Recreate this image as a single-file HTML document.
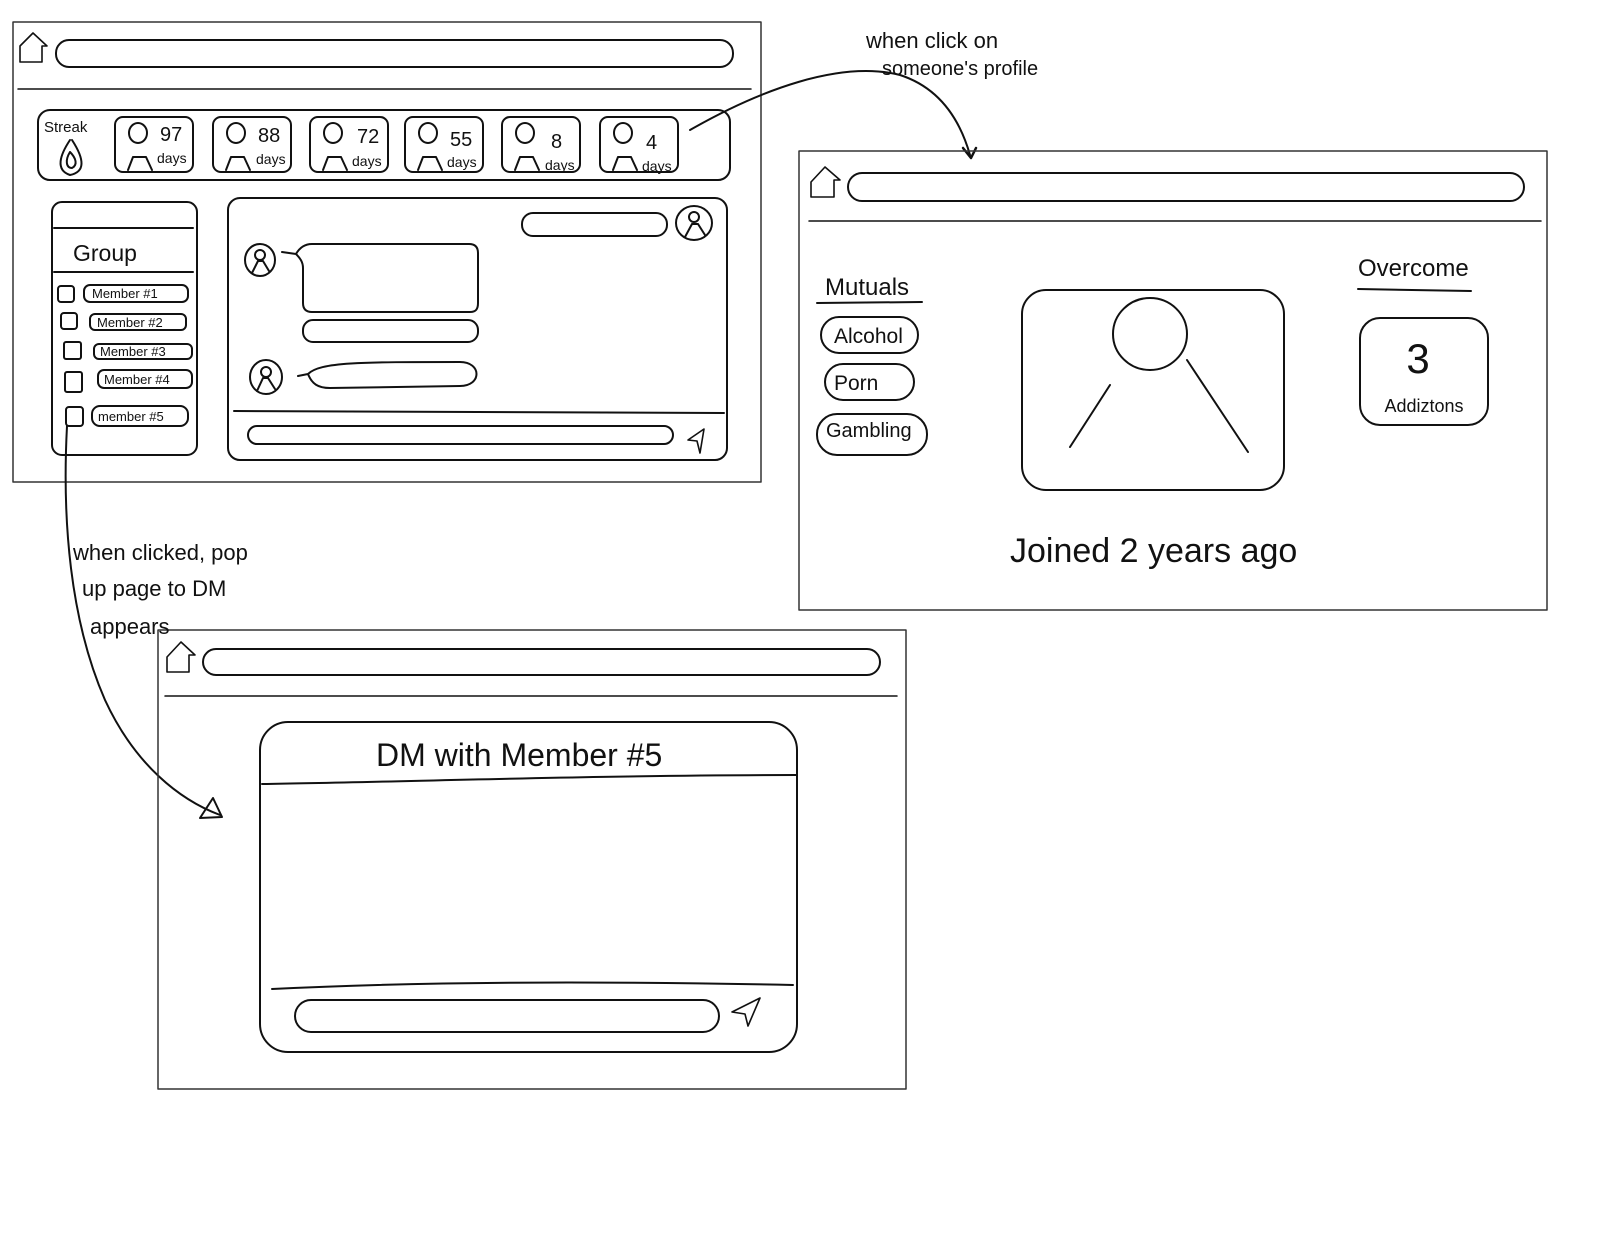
<!DOCTYPE html>
<html><head><meta charset="utf-8"><style>
html,body{margin:0;padding:0;background:#fff;}
svg{display:block}
text{font-family:"Liberation Sans",sans-serif;fill:#111;font-weight:300}
</style></head><body>
<svg width="1600" height="1239" viewBox="0 0 1600 1239" xmlns="http://www.w3.org/2000/svg">
<rect width="1600" height="1239" fill="#fff"/>
<g fill="none" stroke="#111" stroke-width="2" stroke-linecap="round" stroke-linejoin="round">
<!-- FRAME 1 -->
<rect x="13" y="22" width="748" height="460" stroke="#333" stroke-width="1.5"/>
<path d="M20 62 L20 46 L33 33 L47 46 L42 46 L42 62 Z" stroke-width="1.6"/>
<rect x="56" y="40" width="677" height="27" rx="13"/>
<line x1="18" y1="89" x2="751" y2="89" stroke-width="1.5"/>
<rect x="38" y="110" width="692" height="70" rx="12"/>
<path d="M70 140 C60 155 55 170 70 175 C85 172 85 160 72 140 M70 152 C65 160 66 168 72 168 C78 165 76 158 70 152"/>
<g id="c">
<rect x="115" y="117" width="78" height="55" rx="8"/>
<ellipse cx="138" cy="133" rx="9" ry="10"/>
<path d="M128 170 L133 157 L146 157 L152 170"/>
</g>
<use href="#c" x="98"/><use href="#c" x="195"/><use href="#c" x="290"/><use href="#c" x="387"/><use href="#c" x="485"/>
<!-- group panel -->
<rect x="52" y="202" width="145" height="253" rx="10"/>
<line x1="54" y1="228" x2="193" y2="228"/>
<line x1="54" y1="272" x2="193" y2="272"/>
<rect x="58" y="286" width="16" height="16" rx="3"/><rect x="84" y="285" width="104" height="17" rx="6"/>
<rect x="61" y="313" width="16" height="16" rx="3"/><rect x="90" y="314" width="96" height="16" rx="5"/>
<rect x="64" y="342" width="17" height="17" rx="2"/><rect x="94" y="344" width="98" height="15" rx="5"/>
<rect x="65" y="372" width="17" height="20" rx="2"/><rect x="98" y="370" width="94" height="18" rx="6"/>
<rect x="66" y="407" width="17" height="19" rx="3"/><rect x="92" y="406" width="96" height="20" rx="8"/>
<!-- chat panel -->
<rect x="228" y="198" width="499" height="262" rx="12"/>
<line x1="234" y1="411" x2="724" y2="413"/>
<rect x="248" y="426" width="425" height="18" rx="9"/>
<path d="M704 429 L688 440 L697 441 L700 453 Z" stroke-width="1.6"/>
<rect x="522" y="213" width="145" height="23" rx="11"/>
<ellipse cx="694" cy="223" rx="18" ry="17"/><circle cx="694" cy="217" r="5"/><path d="M685 237 L692 224 L698 224 L705 235"/>
<ellipse cx="260" cy="260" rx="15" ry="16"/><circle cx="260" cy="255" r="5"/><path d="M252 273 L258 261 L263 261 L269 271"/>
<path d="M282 252 L296 254 C300 258 303 262 303 268 L303 303 C303 309 306 312 312 312 L470 312 C476 312 478 309 478 303 L478 253 C478 247 475 244 469 244 L312 244 C305 244 300 247 296 254"/>
<rect x="303" y="320" width="175" height="22" rx="10"/>
<ellipse cx="266" cy="377" rx="16" ry="17"/><circle cx="266" cy="372" r="5"/><path d="M257 391 L263 378 L268 378 L275 389"/>
<path d="M298 376 L308 374 C320 362 360 362 460 362 C482 362 482 386 460 386 L330 388 C318 388 312 384 308 374"/>
<!-- arrow 1 -->
<path d="M690 130 C760 90 840 60 900 75 C940 88 960 120 970 155"/>
<path d="M963 148 L971 158 L976 148" stroke-width="2.5"/>
<!-- arrow 2 -->
<path d="M67 426 C62 520 70 620 105 700 C135 765 180 800 220 815"/>
<path d="M200 818 L222 817 L213 798 Z" stroke-width="2"/>

<!-- FRAME 2 -->
<rect x="799" y="151" width="748" height="459" stroke="#333" stroke-width="1.5"/>
<path d="M811 197 L811 182 L825 167 L840 180 L834 180 L834 197 Z" stroke-width="1.6"/>
<rect x="848" y="173" width="676" height="28" rx="14"/>
<line x1="809" y1="221" x2="1541" y2="221" stroke-width="1.5"/>
<line x1="817" y1="303" x2="922" y2="302"/>
<rect x="821" y="317" width="97" height="36" rx="18"/>
<rect x="825" y="364" width="89" height="36" rx="18"/>
<rect x="817" y="414" width="110" height="41" rx="20"/>
<rect x="1022" y="290" width="262" height="200" rx="24"/>
<ellipse cx="1150" cy="334" rx="37" ry="36"/>
<path d="M1110 385 L1070 447 M1187 360 L1248 452"/>
<line x1="1358" y1="289" x2="1471" y2="291"/>
<rect x="1360" y="318" width="128" height="107" rx="20"/>

<!-- FRAME 3 -->
<rect x="158" y="630" width="748" height="459" stroke="#333" stroke-width="1.5"/>
<path d="M167 672 L167 657 L181 642 L195 655 L189 655 L189 672 Z" stroke-width="1.6"/>
<rect x="203" y="649" width="677" height="26" rx="13"/>
<line x1="165" y1="696" x2="897" y2="696" stroke-width="1.5"/>
<rect x="260" y="722" width="537" height="330" rx="28"/>
<path d="M262 784 C400 782 600 775 796 775"/>
<path d="M272 989 C450 980 650 982 793 985"/>
<rect x="295" y="1000" width="424" height="32" rx="16"/>
<path d="M760 998 L732 1012 L745 1014 L748 1026 Z" stroke-width="1.6"/>
</g>
<!-- TEXT -->
<g>
<text x="44" y="132" font-size="15">Streak</text>
<g font-size="20"><text x="160" y="141">97</text><text x="258" y="142">88</text><text x="357" y="143">72</text><text x="450" y="146">55</text><text x="551" y="148">8</text><text x="646" y="149">4</text></g>
<g font-size="14"><text x="157" y="163">days</text><text x="256" y="164">days</text><text x="352" y="166">days</text><text x="447" y="167">days</text><text x="545" y="170">days</text><text x="642" y="171">days</text></g>
<text x="73" y="261" font-size="23">Group</text>
<g font-size="13"><text x="92" y="298">Member #1</text><text x="97" y="327">Member #2</text><text x="100" y="356">Member #3</text><text x="104" y="384">Member #4</text><text x="98" y="421">member #5</text></g>
<text x="866" y="48" font-size="22">when  click  on</text>
<text x="882" y="75" font-size="20">someone's  profile</text>
<text x="73" y="560" font-size="22">when clicked, pop</text>
<text x="82" y="596" font-size="22">up page to DM</text>
<text x="90" y="634" font-size="22">appears</text>
<text x="825" y="295" font-size="24">Mutuals</text>
<text x="834" y="343" font-size="21">Alcohol</text>
<text x="834" y="390" font-size="21">Porn</text>
<text x="826" y="437" font-size="20">Gambling</text>
<text x="1358" y="276" font-size="24">Overcome</text>
<text x="1418" y="373" font-size="42" text-anchor="middle">3</text>
<text x="1424" y="412" font-size="18" text-anchor="middle">Addiztons</text>
<text x="1010" y="562" font-size="34">Joined  2 years ago</text>
<text x="376" y="766" font-size="32">DM  with  Member #5</text>
</g>
</svg>
</body></html>
